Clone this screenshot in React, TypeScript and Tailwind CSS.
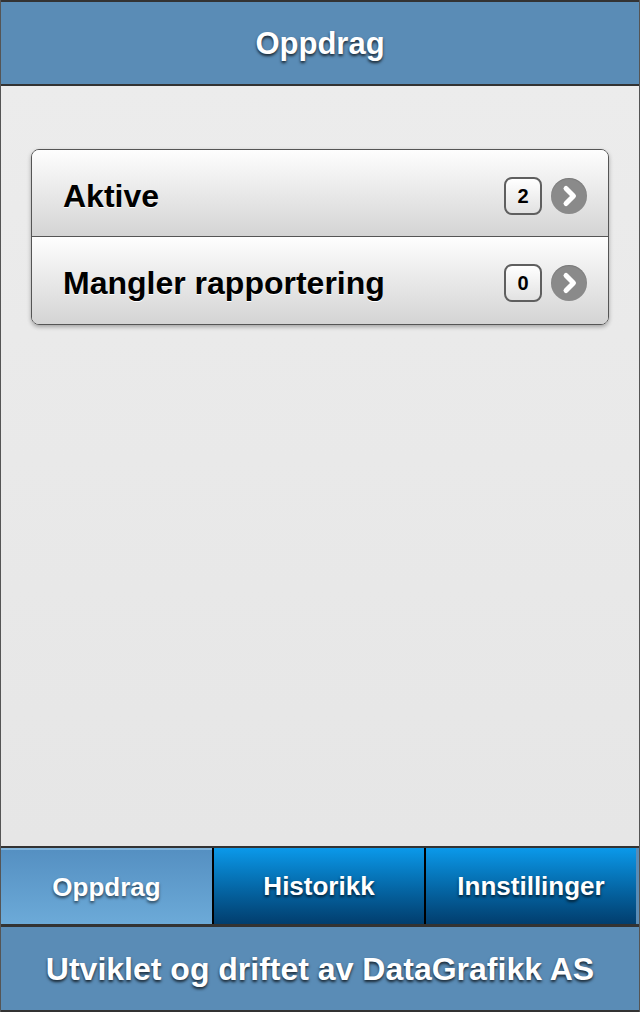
import React from "react";

const font = { fontFamily: '"Liberation Sans", Arial, Helvetica, sans-serif' };

function Chevron() {
  return (
    <div className="w-[36px] h-[36px] rounded-full bg-[#8a8a8a] flex items-center justify-center shadow-[inset_0_1px_1px_rgba(0,0,0,0.15)]">
      <svg width="36" height="36" viewBox="0 0 36 36">
        <path d="M15 10.5 L22.5 18 L15 25.5" fill="none" stroke="#ffffff" strokeWidth="5" strokeLinecap="round" strokeLinejoin="round" />
      </svg>
    </div>
  );
}

function Row({ label, count, last }: { label: string; count: number; last?: boolean }) {
  return (
    <div
      className={`h-[87px] flex items-center pt-[5px] pl-[31px] pr-[21px] bg-gradient-to-b from-[#fefefe] to-[#d4d4d4] ${last ? "" : "border-b border-[#555]"}`}
    >
      <span className="flex-1 text-[32px] font-bold text-black leading-none [text-shadow:0_1px_0_#ffffff]">{label}</span>
      <div className="w-[38px] h-[38px] rounded-[8px] border-2 border-[#5f5f5f] bg-gradient-to-b from-[#ffffff] to-[#e2e2e2] flex items-center justify-center text-[20px] font-bold text-black leading-none mr-[9px]">
        {count}
      </div>
      <Chevron />
    </div>
  );
}

export default function App() {
  return (
    <div style={font} className="w-[640px] h-[1012px] flex flex-col border-x border-[#555] bg-[#5a8cb6] overflow-hidden">
      <div className="h-[86px] shrink-0 border-t-2 border-b-2 border-[#333] bg-[#5a8cb6] flex items-center justify-center">
        <span className="text-[31px] font-bold text-white leading-none [text-shadow:0_2px_3px_rgba(0,0,0,0.75)]">Oppdrag</span>
      </div>
      <div className="flex-1 bg-gradient-to-b from-[#ececec] to-[#e6e6e6] pt-[63px] px-[30px]">
        <div className="rounded-[8px] border border-[#555] overflow-hidden shadow-[0_2px_4px_rgba(0,0,0,0.3)]">
          <Row label="Aktive" count={2} />
          <Row label="Mangler rapportering" count={0} last />
        </div>
      </div>
      <div className="h-[81px] shrink-0 border-t-2 border-b-[3px] border-[#333] flex bg-[#5a8cb6]">
        <div className="w-[211px] flex items-center justify-center bg-gradient-to-b from-[#5590c2] to-[#6caad8] border-t-2 border-[#80b4dc]">
          <span className="text-[26px] font-bold text-white leading-none [text-shadow:0_2px_3px_rgba(0,0,0,0.6)]">Oppdrag</span>
        </div>
        <div className="w-[2px] bg-black" />
        <div className="w-[210px] flex items-center justify-center bg-gradient-to-b from-[#0b99ea] to-[#023e6e]">
          <span className="text-[26px] font-bold text-white leading-none [text-shadow:0_2px_3px_rgba(0,0,0,0.7)]">Historikk</span>
        </div>
        <div className="w-[2px] bg-black" />
        <div className="w-[210px] flex items-center justify-center bg-gradient-to-b from-[#0b99ea] to-[#023e6e]">
          <span className="text-[26px] font-bold text-white leading-none [text-shadow:0_2px_3px_rgba(0,0,0,0.7)]">Innstillinger</span>
        </div>
      </div>
      <div className="h-[85px] shrink-0 border-b-2 border-[#333] bg-[#5a8cb6] flex items-center justify-center">
        <span className="text-[32px] font-bold text-white leading-none [text-shadow:0_2px_3px_rgba(0,0,0,0.75)]">Utviklet og driftet av DataGrafikk AS</span>
      </div>
    </div>
  );
}
